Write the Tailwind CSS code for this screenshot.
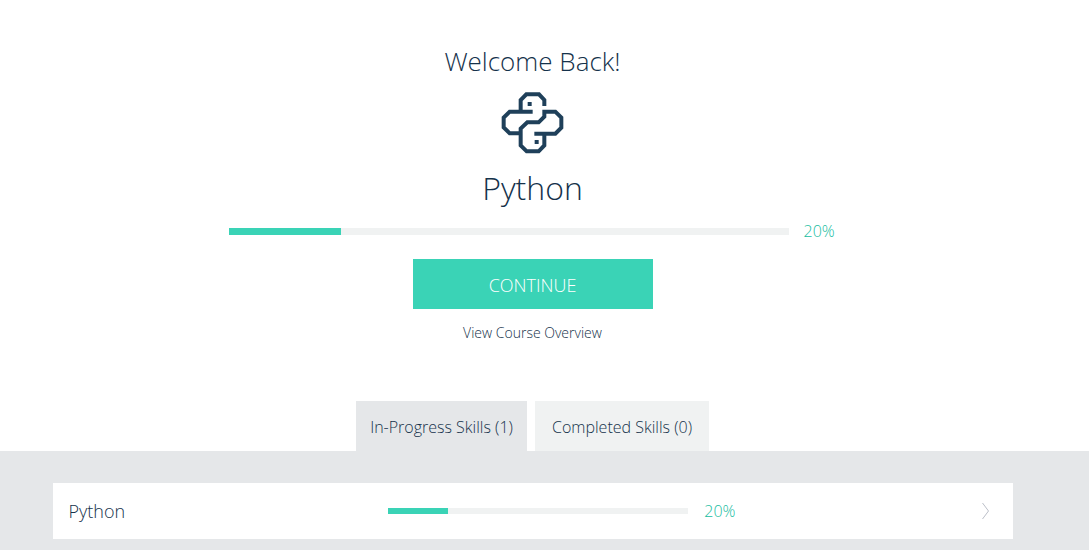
<!DOCTYPE html>
<html lang="en">
<head>
<meta charset="utf-8">
<meta name="viewport" content="width=device-width, initial-scale=1">
<title>Welcome Back!</title>
<script src="https://cdn.jsdelivr.net/npm/@tailwindcss/browser@4"></script>
</head>
<body class="min-h-screen flex flex-col bg-white font-['Open_Sans',sans-serif] font-light text-[#15324b]">
<main class="flex grow flex-col">
  <section class="flex flex-col items-center pl-4 pr-10 pt-[43px]">
    <h1 class="text-[26px] leading-9">Welcome Back!</h1>
    <svg class="mt-[13px] h-[62px] w-[63px]" viewBox="27 18 189 186" fill="none" stroke="#1f405a" stroke-width="12" aria-hidden="true">
      <path d="M86 77V42L103 25H141L157 42V60"/>
      <path d="M122 77H53L35 95V124L53 142H86"/>
      <path d="M127 143H190L208 125V95L190 77H157V92L140 109H106L86 128V178L104 196H140L157 178V143"/>
      <path fill="#1f405a" stroke="none" d="M107 48h12v12h-12zM128 162h12v12h-12z"/>
    </svg>
    <h2 class="mt-2.5 text-[32px] leading-12">Python</h2>
    <div class="mt-[7px] flex w-full max-w-[608px] items-center gap-[15px] text-base leading-6 text-[#20bd9f]">
      <div class="h-[7px] grow bg-[#f0f2f2]" role="progressbar" aria-label="Python progress" aria-valuenow="20" aria-valuemin="0" aria-valuemax="100">
        <div class="h-full bg-[#3ad3b6]" style="width:20%"></div>
      </div>
      <span class="w-[33px]">20%</span>
    </div>
    <button type="button" class="mt-4 h-[50px] w-60 bg-[#3ad3b6] pt-0.5 text-lg font-light text-white">CONTINUE</button>
    <a href="#" class="mt-3 text-sm leading-6">View Course Overview</a>
    <div class="mt-14 flex gap-2 text-base" role="tablist">
      <button type="button" role="tab" aria-selected="true" class="h-[50px] min-w-[171px] bg-[#e5e7e9] pt-0.5 whitespace-nowrap">In-Progress Skills (1)</button>
      <button type="button" role="tab" aria-selected="false" class="h-[50px] min-w-[174px] bg-[#f0f2f2] pt-0.5 whitespace-nowrap">Completed Skills (0)</button>
    </div>
  </section>
  <section class="grow bg-[#e5e7e9] pb-[11px] pl-4 pr-10 pt-8">
    <a href="#" class="mx-auto flex h-14 max-w-[960px] items-center bg-white pl-4 pr-6">
      <span class="w-[34.7%] text-lg">Python</span>
      <span class="flex w-[38%] items-center gap-4 text-base text-[#20bd9f]">
        <span class="h-1.5 grow bg-[#f0f2f2]"><span class="block h-full bg-[#3ad3b6]" style="width:20%"></span></span>
        <span class="w-[33px]">20%</span>
      </span>
      <svg class="ml-auto h-4 w-[7px]" viewBox="0 0 7 16" fill="none" stroke="#bbbfc8" aria-hidden="true"><path d="M.5 0 6.5 8 .5 16"/></svg>
    </a>
  </section>
</main>
</body>
</html>
